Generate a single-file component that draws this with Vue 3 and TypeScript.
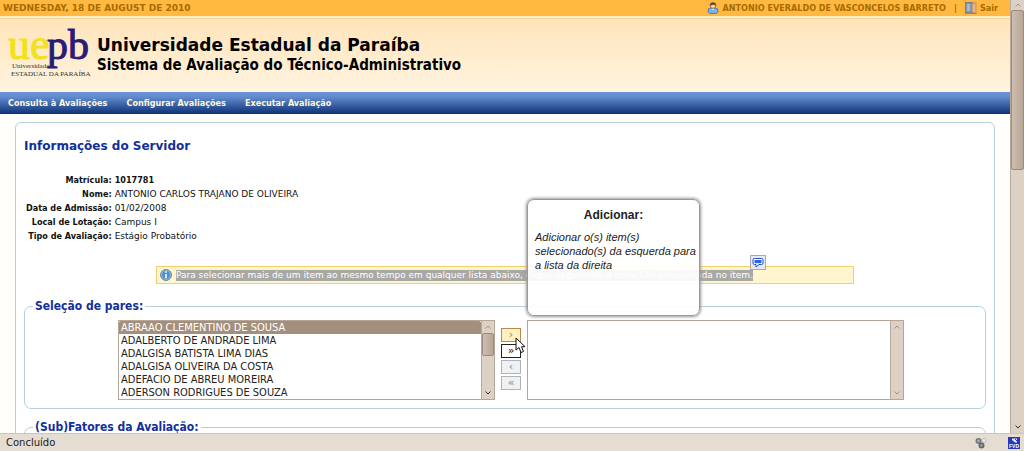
<script setup lang="ts">
import { ref } from 'vue'

interface Field {
  label: string
  value: string
  strong?: boolean
}

const fields: Field[] = [
  { label: 'Matrícula:', value: '1017781', strong: true },
  { label: 'Nome:', value: 'ANTONIO CARLOS TRAJANO DE OLIVEIRA' },
  { label: 'Data de Admissão:', value: '01/02/2008' },
  { label: 'Local de Lotação:', value: 'Campus I' },
  { label: 'Tipo de Avaliação:', value: 'Estágio Probatório' },
]

const menu: string[] = ['Consulta à Avaliações', 'Configurar Avaliações', 'Executar Avaliação']

const people: string[] = [
  'ABRAAO CLEMENTINO DE SOUSA',
  'ADALBERTO DE ANDRADE LIMA',
  'ADALGISA BATISTA LIMA DIAS',
  'ADALGISA OLIVEIRA DA COSTA',
  'ADEFACIO DE ABREU MOREIRA',
  'ADERSON RODRIGUES DE SOUZA',
]

const chosen = ref<string[]>([people[0]])
const peers = ref<string[]>([])
</script>

<template>
  <div class="window">
    <div class="viewport">
      <div class="page">
        <div class="topbar">
          <span>WEDNESDAY, 18 DE AUGUST DE 2010</span>
          <div class="session">
            <svg class="user-icon" viewBox="0 0 12 12" aria-hidden="true">
              <path d="M1 9Q1 6 4 6h4q3 0 3 3 0 2.600-5 2.600T1 9z" fill="#7db4f0" stroke="#2c68b4" stroke-width=".8" />
              <path d="M4.500 6.300L6 8l1.500-1.700z" fill="#fff" />
              <circle cx="6" cy="3.500" r="2.900" fill="#fbd9ae" stroke="#7a4b20" stroke-width=".7" />
              <path d="M3 3.600C2.600-.4 9.400-.4 9 3.600Q7 3.200 6.500 2.400 5 3.500 3 3.600z" fill="#6a4030" />
            </svg>
            <span>ANTONIO EVERALDO DE VASCONCELOS BARRETO</span>
            <span class="divider">|</span>
            <a href="#" class="exit">
              <svg class="exit-icon" viewBox="0 0 12 12" aria-hidden="true">
                <rect x=".5" y=".5" width="7" height="10.500" fill="#8395ad" stroke="#7c8088" />
                <path d="M2 2h3v7H2z" fill="#a7bad2" />
                <path d="M7 2l4-1.500v11L7 10z" fill="#e0b58f" stroke="#a97c55" stroke-width=".6" />
                <path d="M0 11.500h11.500" stroke="#9c8468" />
              </svg>
              Sair
            </a>
          </div>
        </div>

        <header class="header">
          <svg class="logo" viewBox="0 0 84 56" role="img" aria-label="UEPB">
            <text x="0" y="36" class="logo-ue">ue</text>
            <text x="39" y="36" class="logo-pb">pb</text>
            <text x="4" y="45" class="logo-small">Universidade</text>
            <text x="3" y="53" class="logo-small">ESTADUAL DA PARAÍBA</text>
          </svg>
          <div>
            <h1>Universidade Estadual da Paraíba</h1>
            <h2>Sistema de Avaliação do Técnico-Administrativo</h2>
          </div>
        </header>

        <nav class="menu">
          <a v-for="item in menu" :key="item" href="#">{{ item }}</a>
        </nav>

        <main class="panel">
          <h3>Informações do Servidor</h3>
          <table class="info">
            <tbody>
              <tr v-for="field in fields" :key="field.label">
                <th scope="row">{{ field.label }}</th>
                <td :class="{ strong: field.strong }">{{ field.value }}</td>
              </tr>
            </tbody>
          </table>

          <div class="notice">
            <svg class="info-icon" viewBox="0 0 12 12" aria-hidden="true">
              <circle cx="6" cy="6" r="5.400" fill="#4d8fc9" stroke="#6b8299" />
              <circle cx="6" cy="6" r="4.400" fill="none" stroke="#a9cdeb" stroke-width=".7" />
              <path d="M6 2.200v1.600M6 5v4.200" stroke="#fff" stroke-width="1.600" />
            </svg>
            <span class="marked">Para selecionar mais de um item ao mesmo tempo em qualquer lista abaixo, clique segurando a tecla Ctrl pressionada no item.</span>
            <button type="button" class="translate" aria-label="Traduzir">
              <svg viewBox="0 0 12 12" aria-hidden="true">
                <path d="M2.500 1.500h7q1.500 0 1.500 1.500v3q0 1.500-1.500 1.500H7L4 10V7.500H2.500Q1 7.500 1 6V3q0-1.500 1.500-1.500z" fill="#fff" stroke="#1e50d2" />
                <path d="M2.500 3h7v3.200h-7z" fill="#2b62e4" />
              </svg>
            </button>
          </div>

          <fieldset class="group">
            <legend>Seleção de pares:</legend>
            <div class="picker">
              <div class="listbox">
                <select v-model="chosen" multiple size="6" aria-label="Servidores disponíveis">
                  <option v-for="person in people" :key="person" :value="person">{{ person }}</option>
                </select>
                <div class="scroll">
                  <svg class="arrow dim" viewBox="0 0 6 4"><path d="M.5 3.500L3 1l2.500 2.500" /></svg>
                  <div class="thumb short"></div>
                  <svg class="arrow bottom" viewBox="0 0 6 4"><path d="M.5 .5L3 3 5.500 .5" /></svg>
                </div>
              </div>
              <div class="moves">
                <button type="button" class="hot" aria-describedby="tip">›
                  <svg class="pointer" viewBox="0 0 11 17" aria-hidden="true">
                    <path d="M1 1v12l3-2.500 2 5 2.500-1-2-4.800H10z" fill="#fff" stroke="#111" />
                  </svg>
                </button>
                <button type="button" class="ready">»</button>
                <button type="button" disabled>‹</button>
                <button type="button" disabled>«</button>
                <div id="tip" class="tip" role="tooltip">
                  <strong>Adicionar:</strong>
                  <em>Adicionar o(s) item(s) selecionado(s) da esquerda para a lista da direita</em>
                </div>
              </div>
              <div class="listbox">
                <select v-model="peers" multiple size="6" aria-label="Pares selecionados"></select>
                <div class="scroll">
                  <svg class="arrow dim" viewBox="0 0 6 4"><path d="M.5 3.500L3 1l2.500 2.500" /></svg>
                  <svg class="arrow dim bottom" viewBox="0 0 6 4"><path d="M.5 .5L3 3 5.500 .5" /></svg>
                </div>
              </div>
            </div>
          </fieldset>

          <fieldset class="group next">
            <legend>(Sub)Fatores da Avaliação:</legend>
            <div class="picker"></div>
          </fieldset>
        </main>
      </div>

      <div class="scroll main-scroll">
        <svg class="arrow dim" viewBox="0 0 6 4"><path d="M.5 3.500L3 1l2.500 2.500" /></svg>
        <div class="thumb long"></div>
        <svg class="arrow bottom" viewBox="0 0 6 4"><path d="M.5 .5L3 3 5.500 .5" /></svg>
      </div>
    </div>

    <footer class="status">
      <span>Concluído</span>
      <div class="status-icons">
        <svg class="gears" viewBox="0 0 12 12" aria-hidden="true">
          <circle cx="9" cy="3.500" r="2" fill="#eee" stroke="#bbb" />
          <circle cx="3.500" cy="4" r="2.200" fill="#aaa" stroke="#777" stroke-width="1.600" />
          <circle cx="6.500" cy="8.500" r="2.200" fill="#999" stroke="#666" stroke-width="1.600" />
        </svg>
        <svg class="fvd" viewBox="0 0 12 12" aria-hidden="true">
          <rect width="12" height="12" fill="#2936b5" />
          <path d="M4 1.500h5v4H7L4 3z" fill="#dfe6ff" />
          <path d="M7 2l3 3" stroke="#2936b5" />
          <text x="6" y="11" text-anchor="middle">FVD</text>
        </svg>
      </div>
    </footer>
  </div>
</template>

<style>
html,
body {
  margin: 0;
  overflow: hidden;
}
</style>

<style scoped>
.window {
  display: flex;
  flex-direction: column;
  height: 100vh;
  font-family: "DejaVu Sans", Verdana, sans-serif;
  font-size: 9px;
  color: #111;
  background: #fffefb;
}

.window * {
  box-sizing: border-box;
}

.viewport {
  display: flex;
  flex: 1;
  min-height: 0;
}

.page {
  flex: 1;
  min-width: 0;
  overflow: hidden;
}

a {
  color: inherit;
  text-decoration: none;
}

.topbar {
  display: flex;
  justify-content: space-between;
  align-items: center;
  height: 16px;
  padding: 0 12px 0 3px;
  font-weight: bold;
  color: #a86b00;
  background: #ffb940;
}

.session,
.exit {
  display: flex;
  align-items: center;
}

.session,
.menu,
.info th,
.info .strong,
h2,
legend,
select {
  font-family: "DejaVu Sans Condensed", "DejaVu Sans", sans-serif;
}

.session {
  gap: 4px;
}

.divider {
  margin: 0 4px;
}

.exit {
  gap: 3px;
}

.user-icon,
.exit-icon {
  width: 12px;
  height: 12px;
}

.header {
  display: flex;
  gap: 5px;
  height: 76px;
  padding: 5px 8px 0;
  border-top: 2px solid #fff1cf;
  background: linear-gradient(#ffd48c 0 1px, #ffe4ba 1px, #fff4e0);
}

.logo {
  width: 84px;
  height: 56px;
  overflow: visible;
}

.logo text {
  font-family: "Liberation Serif", serif;
}

.logo .logo-ue {
  font-size: 44px;
  fill: #f2e11c;
  stroke: #f2e11c;
}

.logo .logo-pb {
  font-size: 42px;
  fill: #2b1a78;
  stroke: #2b1a78;
}

.logo .logo-small {
  font-size: 7px;
  fill: #333;
}

h1,
h2,
h3 {
  margin: 0;
}

h1 {
  margin-top: 12px;
  font-size: 17px;
  line-height: 20px;
  color: #000;
}

h2 {
  font-size: 15px;
  line-height: 20px;
  color: #000;
}

.menu {
  display: flex;
  gap: 19px;
  align-items: center;
  height: 22px;
  padding: 0 8px;
  font-weight: bold;
  color: #fff8dc;
  background: linear-gradient(#6d94d8, #5f88cd 25%, #0d3173);
}

.panel {
  margin: 8px 15px 0;
  padding: 15px 8px 40px;
  border: 1px solid #b5cfdf;
  border-radius: 6px;
  background: #fff;
}

h3 {
  font-size: 12px;
  line-height: 16px;
  color: #12309a;
}

.info {
  margin-top: 19px;
  border-collapse: collapse;
  line-height: 14px;
}

.info th,
.info td {
  padding: 0;
}

.info th {
  padding: 0 3px 0 2px;
  text-align: right;
}

.info .strong {
  font-weight: bold;
}

.notice {
  position: relative;
  display: flex;
  gap: 4px;
  align-items: center;
  width: 698px;
  max-width: 100%;
  height: 18px;
  margin: 23px auto 0;
  padding: 0 3px;
  border: 1px solid #f3cf70;
  background: #fff5cf;
  white-space: nowrap;
}

.info-icon {
  width: 12px;
  height: 12px;
}

.marked {
  line-height: 11px;
  color: #fff;
  background: #aaa8a5;
}

.translate {
  position: absolute;
  top: -12px;
  left: 593px;
  width: 16px;
  height: 15px;
  padding: 1px;
  border: 1px solid #aaa8b0;
  background: #e8e8ee;
}

.translate svg {
  display: block;
  width: 12px;
  height: 12px;
}

.group {
  min-width: 0;
  margin: 14px 0 0;
  padding: 0 8px 8px;
  border: 1px solid #b5cfdf;
  border-radius: 7px;
}

.next {
  margin-top: 10px;
}

legend {
  padding: 0 2px;
  font-size: 12px;
  line-height: 16px;
  font-weight: bold;
  color: #12309a;
}

.picker {
  display: flex;
  justify-content: center;
  gap: 6px;
  min-height: 80px;
  margin-top: 6px;
  padding-left: 12px;
}

.listbox {
  display: flex;
  width: 377px;
  height: 80px;
  border: 1px solid #b5a698;
  background: #fff;
}

select {
  flex: 1;
  min-width: 0;
  height: 78px;
  padding: 0;
  border: 0;
  outline: 0;
  overflow: hidden;
  background: #fff;
  font-size: 11px;
  color: #222;
}

option {
  height: 13px;
  min-height: 13px;
  padding: 0 2px;
  line-height: 13px;
}

option:checked {
  background: linear-gradient(#a48f7d, #a48f7d);
  -webkit-text-fill-color: #fff;
}

.scroll {
  display: flex;
  flex-direction: column;
  align-items: center;
  width: 13px;
  padding: 4px 0;
  border-left: 1px solid #b9aa9c;
  background: #ddd1c6;
}

.main-scroll {
  width: 14px;
  padding: 3px 0 4px;
}

.arrow {
  width: 6px;
  height: 4px;
  fill: none;
  stroke: #333;
}

.dim {
  stroke: #9e9287;
}

.bottom {
  margin-top: auto;
}

.thumb {
  width: 100%;
  border: 1px solid #9c8b7d;
  border-radius: 2px;
  background: linear-gradient(90deg, #cdbeb1, #b8a696);
}

.short {
  height: 23px;
  margin-top: 4px;
}

.long {
  height: 160px;
  margin-top: 3px;
}

.moves {
  position: relative;
  display: flex;
  flex-direction: column;
  gap: 2px;
  width: 20px;
  padding-top: 8px;
}

.moves button {
  position: relative;
  height: 14px;
  padding: 0;
  border: 1px solid #b0b4b8;
  background: #eff1f2;
  font-family: "DejaVu Sans", sans-serif;
  font-size: 11px;
  line-height: 10px;
  color: #888;
}

.moves .hot {
  z-index: 2;
  border-color: #b98750;
  background: #fff0bd;
}

.moves .ready {
  border-color: #222;
  background: #fff;
  color: #111;
}

.pointer {
  position: absolute;
  top: 8px;
  left: 13px;
  width: 11px;
  height: 17px;
}

.tip {
  position: absolute;
  bottom: 84px;
  left: 26px;
  width: 173px;
  height: 117px;
  padding: 7px 3px 7px 7px;
  border: 1px solid #999;
  border-radius: 7px;
  background: rgba(255, 255, 255, 0.92);
  box-shadow: 0 0 3px 1px #999;
  font-family: "Liberation Sans", Arial, sans-serif;
  color: #222;
}

.tip strong {
  display: block;
  margin: 0 4px 7px 0;
  font-size: 12px;
  line-height: 16px;
  text-align: center;
}

.tip em {
  display: block;
  font-size: 11px;
  line-height: 14px;
}

.status {
  display: flex;
  justify-content: space-between;
  align-items: center;
  height: 18px;
  padding: 0 4px 0 6px;
  border-top: 1px solid #cfc4ba;
  background: #e5dcd2;
  font-size: 10px;
  color: #222;
}

.status-icons {
  display: flex;
  gap: 21px;
}

.gears,
.fvd {
  width: 12px;
  height: 12px;
}

.fvd text {
  font-family: "Liberation Sans", sans-serif;
  font-size: 5px;
  font-weight: bold;
  fill: #fff;
}
</style>
